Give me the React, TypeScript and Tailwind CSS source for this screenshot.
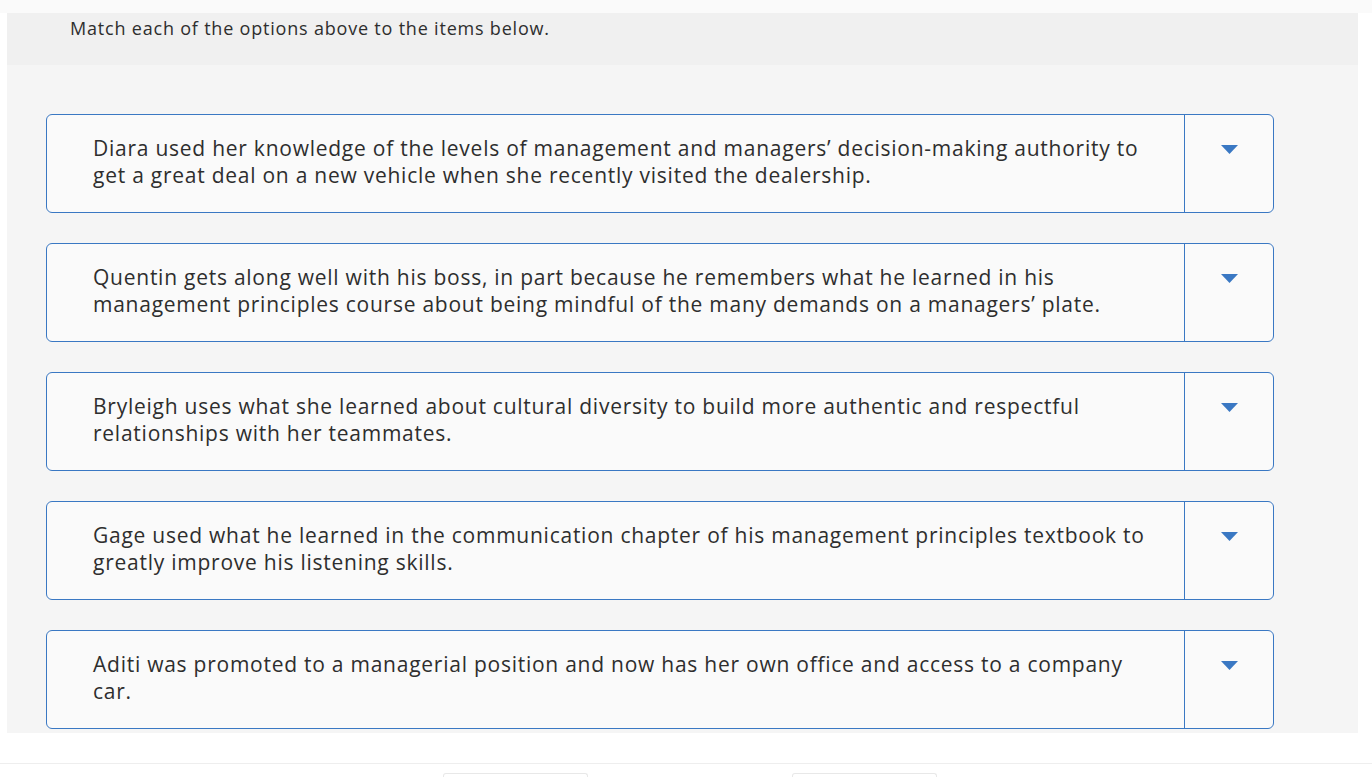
import React from "react";

const items = [
  "Diara used her knowledge of the levels of management and managers’ decision-making authority to get a great deal on a new vehicle when she recently visited the dealership.",
  "Quentin gets along well with his boss, in part because he remembers what he learned in his management principles course about being mindful of the many demands on a managers’ plate.",
  "Bryleigh uses what she learned about cultural diversity to build more authentic and respectful relationships with her teammates.",
  "Gage used what he learned in the communication chapter of his management principles textbook to greatly improve his listening skills.",
  "Aditi was promoted to a managerial position and now has her own office and access to a company car.",
];

function Card({ text }: { text: string }) {
  return (
    <div className="flex h-[99px] w-[1228px] rounded-[6px] border border-[#3a78c3] bg-[#fafafa]">
      <div className="flex flex-1 items-center pb-[4px] pl-[46px] pr-[30px] text-[21px] leading-[27px] tracking-[0.75px] text-[#2e2e2e]">
        <p>{text}</p>
      </div>
      <div className="flex w-[89px] shrink-0 justify-center border-l border-[#3a78c3] pt-[30px]">
        <svg width="17" height="9" viewBox="0 0 17 9">
          <path d="M0 0 H17 L8.5 9 Z" fill="#3a78c3" />
        </svg>
      </div>
    </div>
  );
}

export default function App() {
  return (
    <div className="min-h-[777px] bg-white" style={{ fontFamily: "'Open Sans', Lato, sans-serif" }}>
      <div className="h-[13px] bg-[#fafafa]" />
      <div className="ml-[7px] w-[1351px]">
        <div className="h-[52px] bg-[#f0f0f0] pl-[63px] pt-[2px] text-[18px] tracking-[0.8px] text-[#2e2e2e]">
          Match each of the options above to the items below.
        </div>
        <div className="flex flex-col gap-[30px] bg-[#f5f5f5] pb-[4px] pl-[39px] pt-[49px]">
          {items.map((t, i) => (
            <Card key={i} text={t} />
          ))}
        </div>
      </div>
      <div className="mt-[30px] h-[1px] bg-[#eeeeee]" />
      <div className="relative h-[13px]">
        <div className="absolute left-[443px] top-[9px] h-[6px] w-[145px] rounded-t-[3px] border-l border-r border-t border-[#e8e8e8]" />
        <div className="absolute left-[792px] top-[9px] h-[6px] w-[145px] rounded-t-[3px] border-l border-r border-t border-[#e8e8e8]" />
      </div>
    </div>
  );
}
